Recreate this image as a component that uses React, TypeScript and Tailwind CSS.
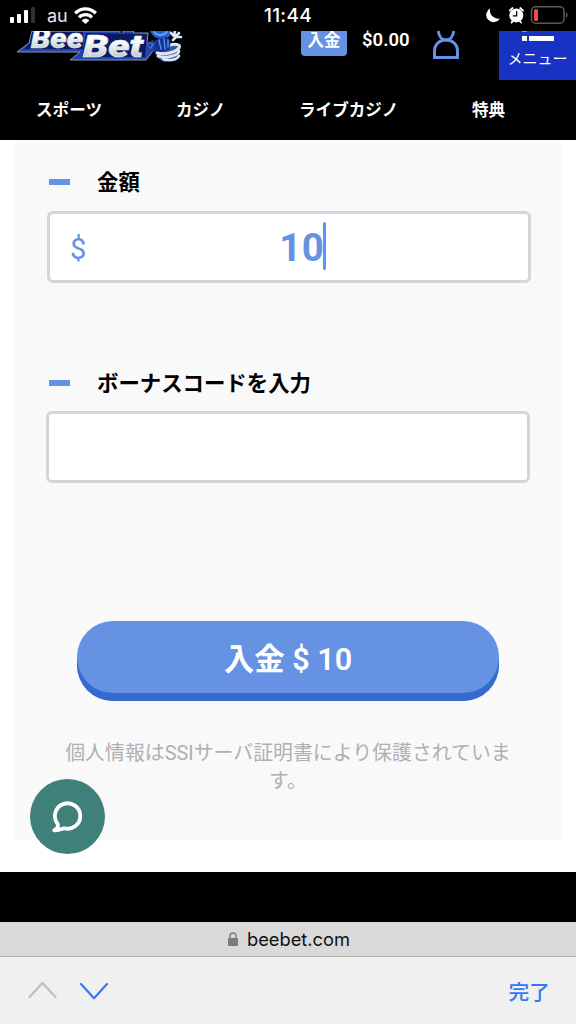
import { useState } from "react";

const navItems = [
  { label: "スポーツ", pos: "ml-[36px] w-[140px]" },
  { label: "カジノ", pos: "w-[123px]" },
  { label: "ライブカジノ", pos: "w-[173px]" },
  { label: "特典", pos: "" },
];

function StatusBar() {
  return (
    <div className="flex h-[31px] items-start bg-black font-['Inter',sans-serif] text-white">
      <svg className="ml-2.5 h-[31px] w-[26px]" viewBox="0 0 26 31" fill="white">
        <rect x="0" y="17" width="4" height="6" rx="1" />
        <rect x="7" y="14" width="4" height="9" rx="1" />
        <rect x="14" y="10" width="4" height="13" rx="1" />
        <rect x="21" y="7" width="4" height="16" rx="1" fill="#303033" />
      </svg>
      <span className="ml-[11px] mt-1 w-[27px] text-[18px] leading-6 text-[#e5e5e5]">au</span>
      <svg className="mt-[7px] h-[17px] w-[23px]" viewBox="0 0 23 17" fill="none" stroke="white" strokeWidth="3.4">
        <path d="M1.2 6.2C7 .4 16 .4 21.8 6.2" />
        <path d="M5 10.4c3.8-3.7 9.2-3.7 13 0" />
        <path d="M11.5 17 7.6 13.4c2.2-2.2 5.6-2.2 7.8 0z" fill="white" stroke="none" />
      </svg>
      <span className="ml-[167px] mt-1 w-[220px] text-[19px] font-medium leading-6 tracking-[0.3px]">11:44</span>
      <svg className="h-[31px] w-[84px]" viewBox="0 0 84 31">
        <path d="M6.2 8.2a7.4 7.4 0 1 0 9.8 10.3A8.3 8.3 0 0 1 6.2 8.2z" fill="white" />
        <g transform="translate(25 7)">
          <circle cx="7.3" cy="8.4" r="7" fill="white" />
          <path d="M.8 3.7 3.6 1M14 3.7 11.2 1M2.5 15.5 4 14M12 15.5 10.8 14" stroke="white" strokeWidth="1.8" strokeLinecap="round" />
          <path d="M7.7 4v4.8H3.8" stroke="black" strokeWidth="1.2" fill="none" />
        </g>
        <rect x="47.5" y="6.8" width="32.5" height="16.4" rx="4" fill="none" stroke="#59595b" strokeWidth="1.6" />
        <rect x="50" y="9" width="4" height="12" rx="1.6" fill="#e9503e" />
        <path d="M82 12v6c2-1 2-5 0-6z" fill="#59595b" />
      </svg>
    </div>
  );
}

function Logo() {
  return (
    <svg className="ml-[16px] h-[33px] w-[170px]" viewBox="0 0 170 33">
      <defs>
        <linearGradient id="silver" x1="0" y1="0" x2="0" y2="1">
          <stop offset=".4" stopColor="#fff" />
          <stop offset=".85" stopColor="#b9c8ca" />
        </linearGradient>
      </defs>
      <path d="M16 0H104V3H107V0H118L117 2H132L131 13L137 20L130 29H54L64 21H1L13 12z" fill="#2343b5" stroke="#8795b2" strokeWidth="1" />
      <path d="M16 1 14 12 8 18H67V1zM70 2 66 26H129L131 3z" fill="#0c1a64" />
      {/* wordmark */}
      <g fontFamily="Roboto, sans-serif" fontWeight="900" fontStyle="italic" fill="url(#silver)" stroke="#e4ebef" strokeWidth=".6" strokeLinejoin="round">
        <text x="0" y="0" fontSize="26" textLength="52" lengthAdjust="spacingAndGlyphs" transform="translate(15 17) scale(1 1.08)">Bee</text>
        <text x="0" y="0" fontSize="28" textLength="60" lengthAdjust="spacingAndGlyphs" transform="translate(67 25.5) scale(1 1.12)">Bet</text>
      </g>
      {/* bee mascot */}
      <g strokeLinecap="round" strokeLinejoin="round">
        <path d="M134 0h21c0 6-4 8-9 8s-10-3-12-8z" fill="#2360ce" />
        <path d="M138 1c3 4 9 4 13 0" stroke="#5ea3f0" strokeWidth="2" fill="none" />
        <path d="M130 12l7-3 4 4 0 8-8-1 2-3z" fill="#1c3f9c" />
        <path d="M132 12l5 1-2 4" stroke="#4b82dc" strokeWidth="1.2" fill="none" />
        <path d="M153 12l12 1-4 9 3 2-4 6-12 1-8-5 3-10z" fill="#3a58a0" />
        <path d="M154 14c6-2 11 0 9 3-3 4-13 7-22 5" stroke="#dfe7f2" strokeWidth="3" fill="none" />
        <path d="M163 20c0 4-12 8-21 5M163 25c-2 4-10 5-16 3" stroke="#dfe7f2" strokeWidth="2.6" fill="none" />
        <path d="M139 9l12-3 4 4-2 9-9 2-5-3z" fill="#142f92" />
        <path d="M143 9l2 9M148 8l1 10M152 9l0 7" stroke="#4f93e4" strokeWidth="1.5" />
        <path d="M155 2l3 3M159 0l-1 5M163 2l-4 4M165 6h-6M157 9l3-3" stroke="#dbe6f7" strokeWidth="2.6" />
      </g>
    </svg>
  );
}

function Header() {
  return (
    <header className="h-[109px] bg-black text-white">
      <div className="flex h-[49px] items-start">
        <Logo />
        <div className="ml-[115px] h-[25px] w-[46px] rounded-b bg-[#6592e3] text-center text-[16.5px] font-bold leading-[20px]">
          入金
        </div>
        <span className="ml-[15px] w-[71px] text-[18.5px] font-semibold leading-[18px]">$0.00</span>
        <svg className="h-[30px] w-[26px]" viewBox="0 0 26 30" fill="none" stroke="#6592e3" strokeWidth="3">
          <path d="M5.3 0c.5 5 3.3 9 7.7 9s7.2-4 7.7-9" />
          <path d="M1.5 26.5V20C1.5 13 7 9 13 9s11.5 4 11.5 11v6.5z" />
        </svg>
        <div className="ml-10 h-[49px] w-[77px] bg-[#1832c3]">
          <svg className="h-[14px] w-[77px]" viewBox="0 0 77 14" fill="white">
            <rect x="23" y="0" width="5" height="1" opacity=".5" />
            <rect x="23" y="5" width="5" height="5" />
            <rect x="30" y="5" width="25" height="5" />
          </svg>
          <div className="text-center text-[15px] leading-[28px]">メニュー</div>
        </div>
      </div>
      <nav className="flex h-[60px] items-center pt-0.5 text-[16.6px] font-bold">
        {navItems.map((item) => (
          <a key={item.label} className={item.pos}>
            {item.label}
          </a>
        ))}
      </nav>
    </header>
  );
}

function FieldLabel({ children }: { children: string }) {
  return (
    <div className="flex h-8 items-center text-[21.4px] font-bold text-black">
      <span className="mr-[26px] h-[6px] w-[21px] bg-[#6592e3]"></span>
      <span className="pl-px pt-0.5">{children}</span>
    </div>
  );
}

function BrowserBar() {
  return (
    <div>
      <div className="flex h-[35px] items-center border-b border-[#b5b5b5] bg-[#d9d9d9] pl-[228px] font-['Inter',sans-serif]">
        <svg className="h-[14px] w-[10px]" viewBox="0 0 10 14" fill="#7b7b7f">
          <rect x="0" y="6" width="10" height="8" rx="1.3" />
          <path d="M2 6.5V4a3 3 0 0 1 6 0v2.5" fill="none" stroke="#7b7b7f" strokeWidth="1.4" />
        </svg>
        <span className="ml-[9px] pt-0.5 text-[18.3px] text-[#111]">beebet.com</span>
      </div>
      <div className="flex h-[67px] items-center bg-[#f0f0f0] pl-[28px] pr-[26px]">
        <svg className="h-5 w-[80px]" viewBox="0 0 80 20" fill="none" strokeWidth="2.2" strokeLinecap="round" strokeLinejoin="round">
          <path d="M1.5 16 14.5 2 27.5 16" stroke="#bebebe" />
          <path d="M53 3 66 17.2 79 3" stroke="#3478f6" />
        </svg>
        <button className="ml-auto pt-1.5 text-[20.8px] font-medium text-[#3478f6]">完了</button>
      </div>
    </div>
  );
}

export default function App() {
  const [amount, setAmount] = useState("10");
  const [code, setCode] = useState("");

  return (
    <div className="relative h-[1024px] w-[576px] overflow-hidden bg-white font-['Roboto','Noto_Sans_CJK_JP',sans-serif]">
      <StatusBar />
      <Header />

      <main className="mx-[15px] h-[700px] bg-[#f9f9f9] px-8 pt-[26px]">
        <div className="pl-0.5">
          <FieldLabel>金額</FieldLabel>
        </div>
        <div className="relative mt-[13px] flex h-[72px] w-[484px] items-center rounded-[6px] border-[3px] border-[#d2d5dc] bg-white pl-[20px] text-[#6592e3]">
          <span className="pt-1 text-[29px]/none">$</span>
          <input
            className="ml-[10px] w-[425px] bg-transparent pl-[183px] text-[38.5px] font-bold leading-none tracking-[0.3px] outline-none"
            value={amount}
            onChange={(e) => setAmount(e.target.value)}
          />
          {/* caret */}
          <span className="absolute left-[273px] top-[8px] h-[48px] w-[3px] rounded-full bg-[#5b93f7]"></span>
        </div>

        <div className="mt-[84px] pl-0.5">
          <FieldLabel>ボーナスコードを入力</FieldLabel>
        </div>
        <input
          className="-ml-px mt-3 block h-[72px] w-[484px] rounded-[6px] border-[3px] border-[#d2d5dc] bg-white px-5 outline-none"
          value={code}
          onChange={(e) => setCode(e.target.value)}
        />

        <button className="ml-[30px] mt-[138px] block h-[80px] w-[422px] rounded-[36px] bg-[#6592e3] pb-0.5 text-[30.5px] font-semibold text-white shadow-[inset_0_-8px_0_#366acf]">
          入金 $ {amount}
        </button>

        <p className="ml-[15px] mt-[39px] w-[452px] text-center text-[19.9px] leading-[28px] text-[#b0b0b0]">
          個人情報はSSIサーバ証明書により保護されています。
        </p>
      </main>

      <footer className="mt-8 h-[50px] bg-black"></footer>
      <BrowserBar />

      {/* chat launcher */}
      <button className="absolute left-[30px] top-[779px] flex size-[75px] items-center justify-center rounded-full bg-[#3f807a]">
        <svg className="size-[34px]" viewBox="0 0 34 34" fill="none" stroke="white" strokeWidth="3.8" strokeLinecap="round" strokeLinejoin="round">
          <path d="M6.7 24A12.7 12.7 0 1 1 13 28.2C10 29.3 7.500 30.7 3.3 30.3C6 29 7.500 27 6.700 24Z" />
        </svg>
      </button>
    </div>
  );
}
